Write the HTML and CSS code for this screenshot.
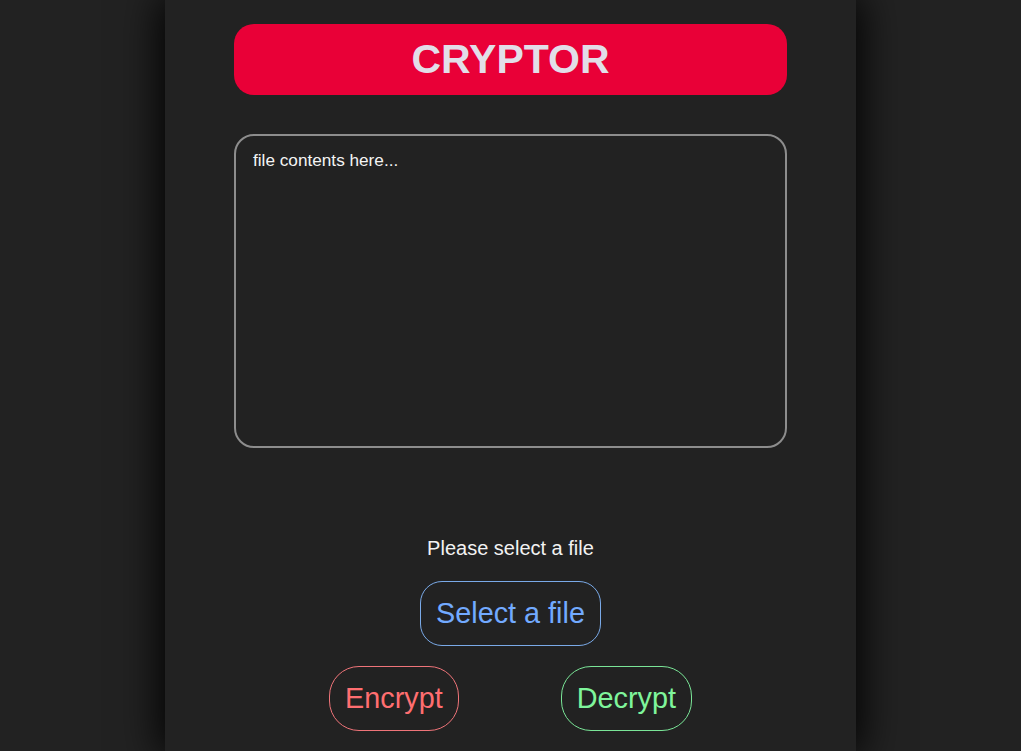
FILE: index.html
```html
<!DOCTYPE html>
<html lang="en">
<head>
<meta charset="utf-8">
<title>Cryptor</title>
<link rel="stylesheet" href="styles.css">
</head>
<body>
<main class="panel">
  <header class="title-bar"><h1 class="title">CRYPTOR</h1></header>
  <textarea class="contents" placeholder="file contents here..."></textarea>
  <p class="status">Please select a file</p>
  <button class="btn btn-select">Select a file</button>
  <div class="actions">
    <button class="btn btn-encrypt">Encrypt</button>
    <button class="btn btn-decrypt">Decrypt</button>
  </div>
</main>
</body>
</html>
```

FILE: styles.css
```css
html, body {
  margin: 0;
  padding: 0;
  background: #222222;
  height: 100%;
  overflow: hidden;
}
body {
  font-family: "Liberation Sans", Arial, sans-serif;
}
.panel {
  width: 691px;
  min-height: 100vh;
  margin: 0 auto;
  background: #222222;
  box-shadow: 0 0 40px 4px rgba(0, 0, 0, 1);
  display: flex;
  flex-direction: column;
  align-items: center;
  padding-top: 24px;
  box-sizing: border-box;
}
.title-bar {
  width: 553px;
  height: 71px;
  background: #e90037;
  border-radius: 20px;
  display: flex;
  align-items: center;
  justify-content: center;
}
.title {
  margin: 0;
  font-size: 41px;
  font-weight: bold;
  color: #e2dee8;
}
.contents {
  margin-top: 39px;
  width: 553px;
  height: 314px;
  box-sizing: border-box;
  background: #222222;
  border: 2px solid #8d8d8d;
  border-radius: 20px;
  padding: 14px 17px;
  font-family: "Liberation Sans", Arial, sans-serif;
  font-size: 17.2px;
  color: #f2f2f2;
  resize: none;
  outline: none;
}
.contents::placeholder {
  color: #f4f4f4;
  opacity: 1;
}
.status {
  margin: 89px 0 0;
  font-size: 20px;
  line-height: 23px;
  color: #f2f2f2;
}
.btn {
  font-family: "Liberation Sans", Arial, sans-serif;
  font-size: 28.8px;
  line-height: 33px;
  padding: 15px 15px;
  background: transparent;
  border: 1px solid;
  cursor: pointer;
}
.btn-select {
  margin-top: 21px;
  color: #72aaff;
  border-color: #7aaae8;
  border-radius: 22px;
}
.actions {
  margin-top: 20px;
  display: flex;
  gap: 102px;
}
.btn-encrypt {
  color: #ff6e70;
  border-color: #ef7479;
  border-radius: 30px;
}
.btn-decrypt {
  color: #7ff59b;
  border-color: #7ae597;
  border-radius: 30px;
}
```
